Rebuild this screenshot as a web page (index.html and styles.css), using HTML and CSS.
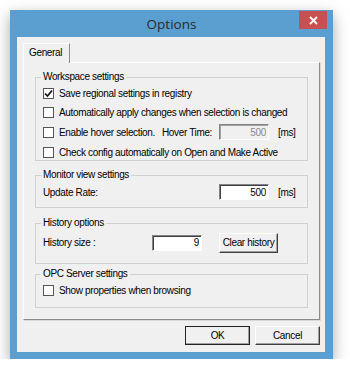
FILE: index.html
```html
<!DOCTYPE html>
<html lang="en">
<head>
    <meta charset="UTF-8">
    <meta name="viewport" content="width=device-width, initial-scale=1.0">
    <title>Options</title>
    <link rel="stylesheet" href="styles.css">
</head>
<body>
    <div class="window">
        <div class="titlebar">
            <span></span>
            <span class="title">Options</span>
            <span class="close">
                <svg width="9" height="9" viewBox="0 0 9 9"><path d="M1 1L8 8M8 1L1 8" stroke="#fff" stroke-width="1.8"/></svg>
            </span>
        </div>

        <div class="client">
            <div class="tabs">
                <div class="tab">General</div>
            </div>

            <div class="panel">
                <!-- Workspace -->
                <fieldset class="group workspace">
                    <legend>Workspace settings</legend>
                    <label class="row">
                        <span class="check"><svg width="9" height="9" viewBox="0 0 9 9"><path d="M1 4.5L3.5 7L8 1.5" fill="none" stroke="#111" stroke-width="1.7"/></svg></span>
                        Save regional settings in registry
                    </label>
                    <label class="row"><span class="check"></span>Automatically apply changes when selection is changed</label>
                    <label class="row">
                        <span class="check"></span>
                        <span class="hover-text">Enable hover selection.</span>
                        <span class="hover-label">Hover Time:</span>
                        <input class="num" type="text" value="500" disabled>
                        <span class="unit">[ms]</span>
                    </label>
                    <label class="row"><span class="check"></span>Check config automatically on Open and Make Active</label>
                </fieldset>

                <!-- Monitor -->
                <fieldset class="group monitor">
                    <legend>Monitor view settings</legend>
                    <div class="row">
                        <span class="field-label rate">Update Rate:</span>
                        <input class="num" type="text" value="500">
                        <span class="unit">[ms]</span>
                    </div>
                </fieldset>

                <!-- History -->
                <fieldset class="group history">
                    <legend>History options</legend>
                    <div class="row tall">
                        <span class="field-label size">History size :</span>
                        <input class="num" type="text" value="9">
                        <button class="btn clear">Clear history</button>
                    </div>
                </fieldset>

                <!-- OPC -->
                <fieldset class="group opc">
                    <legend>OPC Server settings</legend>
                    <label class="row"><span class="check"></span>Show properties when browsing</label>
                </fieldset>
            </div>

            <div class="actions">
                <button class="btn default">OK</button>
                <button class="btn">Cancel</button>
            </div>
        </div>
    </div>
</body>
</html>
```

FILE: styles.css
```css
body {
    margin: 0;
    background: #fff;
    font-family: "Liberation Sans", Arial, sans-serif;
    font-size: 10px;
    letter-spacing: -0.35px;
    color: #000;
}
.window {
    margin: 10px 0 0 10px;
    width: 323px;
    height: 349px;
    background: #5a9fcf;
    display: flex;
    flex-direction: column;
    box-shadow: 0 5px 14px rgba(0, 0, 0, 0.35);
}
.titlebar {
    height: 27px;
    display: grid;
    grid-template-columns: 1fr auto 1fr;
    align-items: start;
}
.title {
    font-family: "Open Sans", sans-serif;
    font-size: 13.5px;
    letter-spacing: 0;
    color: #2a2a2a;
    line-height: 27px;
    padding-top: 1px;
}
.close {
    justify-self: end;
    margin: 1px 6px 0 0;
    width: 28px;
    height: 18px;
    background: #c75050;
    display: flex;
    align-items: center;
    justify-content: center;
}
.client {
    flex: 1;
    margin: 0 8px 7px 7px;
    background: #f0f0f0;
    padding: 6px 5px 0 6px;
}
.tabs {
    display: flex;
    height: 19px;
}
.tab {
    position: relative;
    z-index: 1;
    width: 47px;
    height: 20px;
    box-sizing: border-box;
    border: 1px solid #fff;
    border-right: 1px solid #8a8a8a;
    border-bottom: none;
    background: #f0f0f0;
    padding: 3px 0 0 5px;
    line-height: 12px;
}
.panel {
    height: 258px;
    box-sizing: border-box;
    border: 1px solid;
    border-color: #fff #8a8a8a #8a8a8a #fff;
    box-shadow: 1px 1px 0 #d8d8d8;
    padding: 8px 11px 0 11px;
}
.group {
    margin: 0;
    border: 1px solid #d0d0d0;
    padding: 0 0 0 7px;
    min-inline-size: 0;
}
.group legend {
    padding: 0 2px;
    margin-left: -2px;
    line-height: 12px;
}
.row {
    display: flex;
    align-items: center;
    height: 16px;
    white-space: nowrap;
}
.workspace {
    display: flex;
    flex-direction: column;
    gap: 3.7px;
    padding-top: 2px;
}
.monitor {
    margin-top: 8px;
    padding-top: 3px;
    padding-bottom: 7px;
}
.history {
    margin-top: 9px;
    padding-top: 4px;
    padding-bottom: 11px;
}
.row.tall {
    height: 19px;
}
.opc {
    margin-top: 4px;
    padding-top: 2px;
    padding-bottom: 9px;
}
.check {
    width: 11px;
    height: 11px;
    box-sizing: border-box;
    border: 1px solid #555;
    background: #fff;
    margin-right: 5px;
    display: flex;
    align-items: center;
    justify-content: center;
    flex: none;
}
.hover-text {
    width: 103px;
}
.hover-label {
    width: 57px;
}
.field-label.rate {
    width: 176px;
}
.field-label.size {
    width: 109px;
}
.num {
    width: 50px;
    height: 16px;
    box-sizing: border-box;
    border: 1px solid;
    border-color: #848484 #fff #fff #848484;
    box-shadow: inset 1px 1px 0 #404040;
    background: #fff;
    font: inherit;
    letter-spacing: inherit;
    text-align: right;
    padding: 0 2px 0 0;
    margin: 0;
    color: #000;
}
.num:disabled {
    background: #f0f0f0;
    color: #8a8a8a;
    box-shadow: inset 1px 1px 0 #a0a0a0;
}
.unit {
    margin-left: 9px;
}
.btn {
    font: inherit;
    letter-spacing: inherit;
    color: #000;
    background: #f0f0f0;
    border: 1px solid;
    border-color: #fff #404040 #404040 #fff;
    box-shadow: inset -1px -1px 0 #a0a0a0;
    padding: 0;
    margin: 0;
    height: 19px;
}
.btn.clear {
    width: 59px;
    height: 20px;
    margin-left: 17px;
}
.actions {
    display: flex;
    justify-content: flex-end;
    gap: 5px;
    margin-top: 6px;
}
.actions .btn {
    width: 65px;
}
.btn.default {
    outline: 1px solid #222;
    outline-offset: -1px;
}
```
